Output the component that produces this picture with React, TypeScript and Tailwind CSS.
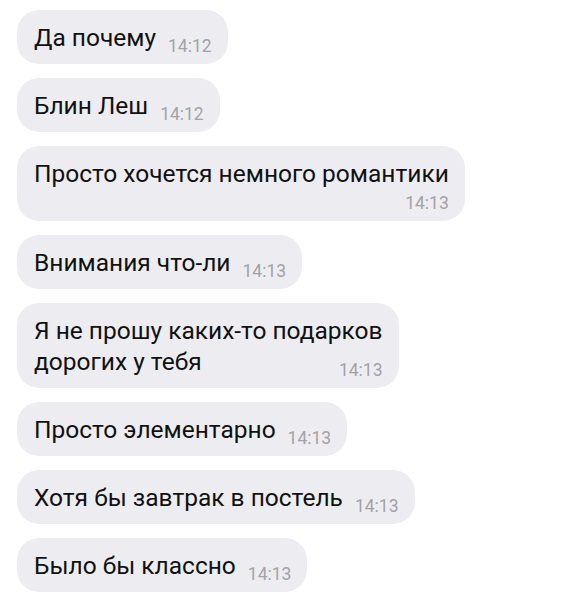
type Msg = {
  text: string[];
  time: string;
  layout: "inline" | "below" | "wrap";
};

const messages: Msg[] = [
  { text: ["Да почему"], time: "14:12", layout: "inline" },
  { text: ["Блин Леш"], time: "14:12", layout: "inline" },
  { text: ["Просто хочется немного романтики"], time: "14:13", layout: "below" },
  { text: ["Внимания что-ли"], time: "14:13", layout: "inline" },
  { text: ["Я не прошу каких-то подарков", "дорогих у тебя"], time: "14:13", layout: "wrap" },
  { text: ["Просто элементарно"], time: "14:13", layout: "inline" },
  { text: ["Хотя бы завтрак в постель"], time: "14:13", layout: "inline" },
  { text: ["Было бы классно"], time: "14:13", layout: "inline" },
];

const Time = ({ value, className = "" }: { value: string; className?: string }) => (
  <span className={`text-[17.5px] leading-[18px] text-[#a2a2a7] whitespace-nowrap ${className}`}>{value}</span>
);

const Bubble = ({ msg }: { msg: Msg }) => {
  //* time sits next to text, on its own row, or beside the last line
  if (msg.layout === "below") {
    return (
      <div className="inline-flex flex-col bg-[#ededf1] rounded-[22px] pl-[17px] pr-4 pt-[12px] pb-[11px]">
        <span>{msg.text[0]}</span>
        <Time value={msg.time} className="self-end mt-[5px] mb-[-2px]" />
      </div>
    );
  }
  if (msg.layout === "wrap") {
    return (
      <div className="inline-grid grid-cols-[auto_auto] bg-[#ededf1] rounded-[22px] pl-[17px] pr-4 pt-[12px] pb-[11px]">
        <span className="col-span-2">{msg.text[0]}</span>
        <span>{msg.text[1]}</span>
        <Time value={msg.time} className="self-end justify-self-end mb-[-2px]" />
      </div>
    );
  }
  return (
    <div className="inline-flex items-end bg-[#ededf1] rounded-[22px] pl-[17px] pr-4 pt-[12px] pb-[11px]">
      <span>{msg.text[0]}</span>
      <Time value={msg.time} className="ml-[12px] mb-[-2px]" />
    </div>
  );
};

export default function App() {
  return (
    <div
      className="min-h-screen bg-white pt-[10px] pl-[17px] flex flex-col items-start gap-[14px] text-[24.5px] leading-[31px] text-[#111111]"
      style={{ fontFamily: "Roboto, 'Noto Sans', sans-serif" }}
    >
      {messages.map((m, i) => (
        <Bubble key={i} msg={m} />
      ))}
    </div>
  );
}
